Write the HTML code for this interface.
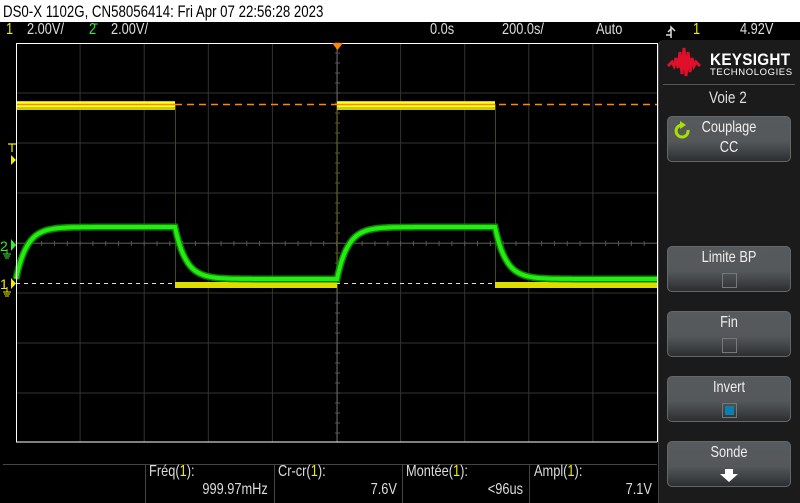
<!DOCTYPE html>
<html><head><meta charset="utf-8"><style>
*{margin:0;padding:0}
body{width:800px;height:503px;background:#000;position:relative;overflow:hidden;font-family:"Liberation Sans",sans-serif}
.t{position:absolute;white-space:nowrap;transform-origin:0 0}
.s{font-size:16px;color:#ddd;transform:scaleX(.8);top:21px}
.m{font-size:16px;color:#ddd;transform:scaleX(.8)}
.r{position:absolute;white-space:nowrap;font-size:16px;color:#ddd;transform:scaleX(.8);transform-origin:100% 0;text-align:right}
#title{position:absolute;left:0;top:0;width:800px;height:22px;background:#fff}
#panel{position:absolute;left:658px;top:40px;width:142px;height:463px;background:#1b1b1b;border-left:1px solid #444;border-top-left-radius:6px}
.btn{position:absolute;left:667px;width:122px;height:44px;border:1px solid #666;border-radius:5px;background:linear-gradient(#575a5d 0%,#55585b 55%,#2c2f32 100%);color:#eee;font-size:16px;text-align:center}
.btn .l1{position:absolute;top:2px;left:0;right:0;transform:scaleX(.8);transform-origin:50% 0}
.chk{position:absolute;left:54px;top:26px;width:13px;height:13px;border:1px solid #777}
</style></head><body>
<div id="title"><div class="t" style="left:3px;top:2px;font-size:17px;color:#000;transform:scaleX(.78)">DS0-X 1102G, CN58056414: Fri Apr 07 22:56:28 2023</div></div>
<div class="t s" style="left:6px;color:#ee0">1</div>
<div class="t s" style="left:27px">2.00V/</div>
<div class="t s" style="left:89px;color:#3e3">2̄</div>
<div class="t s" style="left:111px">2.00V/</div>
<div class="t s" style="left:430px">0.0s</div>
<div class="t s" style="left:502px">200.0s/</div>
<div class="t s" style="left:596px">Auto</div>
<svg width="14" height="16" style="position:absolute;left:664px;top:24px"><path d="M2,11 H7 V3 L11,7 M4,8 L7,5 M7,11 V14" stroke="#ddd" stroke-width="1.5" fill="none"/></svg>
<div class="t s" style="left:693px;color:#ee0">1</div>
<div class="t s" style="left:740px">4.92V</div>

<svg width="800" height="503" style="position:absolute;left:0;top:0" id="sv">
<g stroke="#333" stroke-width="1" id="grid"></g>
<line x1="337.5" y1="43" x2="337.5" y2="442" stroke="#444"/>
<line x1="16" y1="243.5" x2="657" y2="243.5" stroke="#444"/>
<g id="ticks" stroke="#555"></g>
<line x1="175.5" y1="104" x2="175.5" y2="288" stroke="#4a4a00"/>
<line x1="337.5" y1="104" x2="337.5" y2="288" stroke="#4a4a00"/>
<line x1="495.5" y1="104" x2="495.5" y2="288" stroke="#4a4a00"/>
<line x1="16" y1="283.5" x2="657" y2="283.5" stroke="#ddd" stroke-dasharray="4,4"/>
<line x1="175" y1="104.5" x2="657" y2="104.5" stroke="#ff8800" stroke-width="1.5" stroke-dasharray="7,5"/>
<rect x="16" y="101" width="159" height="9" fill="#cccc00"/>
<rect x="337" y="101" width="158" height="9" fill="#cccc00"/>
<rect x="16" y="102" width="159" height="5" fill="#ffff20"/>
<rect x="337" y="102" width="158" height="5" fill="#ffff20"/>
<line x1="16" y1="104.5" x2="175" y2="104.5" stroke="#ff8800" stroke-width="1.5"/>
<line x1="337" y1="104.5" x2="495" y2="104.5" stroke="#ff8800" stroke-width="1.5"/>
<rect x="175" y="282" width="162" height="6" fill="#dddd00"/>
<rect x="495" y="282" width="162" height="6" fill="#dddd00"/>
<path id="g2" fill="none" stroke="#118800" stroke-width="7"/>
<path id="g" fill="none" stroke="#22ee11" stroke-width="4"/>
<line x1="16.5" y1="43" x2="16.5" y2="442" stroke="#fff"/>
<line x1="16" y1="43.5" x2="657" y2="43.5" stroke="#fff"/>
<line x1="16" y1="442" x2="657" y2="442" stroke="#fff"/>
<line x1="657.5" y1="43" x2="657.5" y2="442" stroke="#fff"/>
<polygon points="332,43 343,43 337.5,50" fill="#ff8800"/>
<path d="M8,144h8M12,144v8" stroke="#ee0" stroke-width="1.2"/>
<polygon points="11,155 11,165 16,160" fill="#ee0"/>
<text x="0" y="251" fill="#3e3" font-size="14" font-family="Liberation Sans">2</text>
<polygon points="11,239 11,251 16,245" fill="#3e3"/>
<path d="M7,249v5M3,254h8M4,256h6M5,258h4" stroke="#3e3" fill="none"/>
<text x="0" y="289" fill="#ee0" font-size="14" font-family="Liberation Sans">1</text>
<polygon points="11,278 11,289 16,283.5" fill="#ee0"/>
<path d="M7,287v5M3,292h8M4,294h6M5,296h4" stroke="#ee0" fill="none"/>
<line x1="3" y1="464.5" x2="657" y2="464.5" stroke="#444"/>
<g stroke="#444"><line x1="145.5" y1="464" x2="145.5" y2="503"/><line x1="274.5" y1="464" x2="274.5" y2="503"/><line x1="402.5" y1="464" x2="402.5" y2="503"/><line x1="529.5" y1="464" x2="529.5" y2="503"/></g>
</svg>
<script>
var gr=document.getElementById('grid'),s='';
for(var i=1;i<10;i++){var x=16+i*64.1;s+='<line x1="'+x+'" y1="43" x2="'+x+'" y2="442"/>';}
for(var j=1;j<8;j++){var y=43+j*50;s+='<line x1="16" y1="'+y+'" x2="657" y2="'+y+'"/>';}
gr.innerHTML=s;
var t='';for(var k=0;k<50;k++){var x=16+k*12.82;t+='<line x1="'+x+'" y1="241" x2="'+x+'" y2="246"/>';}
for(var k=0;k<40;k++){var y=43+k*10;t+='<line x1="335" y1="'+y+'" x2="340" y2="'+y+'"/>';}
document.getElementById('ticks').innerHTML=t;
var d='',hi=227,lo=279,tau=11;
function seg(a,b,up){for(var x=a;x<=b;x+=1){var e=Math.exp(-(x-a)/tau);var y=up?hi+(lo-hi)*e:lo-(lo-hi)*e;d+=(d?'L':'M')+x+','+y.toFixed(1);}}
seg(16,175,true);seg(175,337,false);seg(337,495,true);seg(495,657,false);
document.getElementById('g').setAttribute('d',d);
document.getElementById('g2').setAttribute('d',d);
</script>

<div id="panel"></div>
<svg width="40" height="40" style="position:absolute;left:666px;top:44px">
<path d="M2,22 L6,18 L8,22 L10,14 L12,24 L14,8 L16,30 L18,4 L20,32 L22,8 L24,28 L26,14 L28,22 L30,18 L34,22" stroke="#e0102a" stroke-width="3" fill="none"/>
</svg>
<div class="t" style="left:710px;top:50px;font-size:17px;font-weight:bold;color:#fff;letter-spacing:.3px;transform:scaleX(.9)">KEYSIGHT</div>
<div class="t" style="left:710px;top:67px;font-size:9.5px;color:#fff;letter-spacing:.6px">TECHNOLOGIES</div>
<div style="position:absolute;left:663px;top:84px;width:132px;height:1px;background:#555"></div>
<div class="t" style="left:709px;top:88px;font-size:17px;color:#ddd;transform:scaleX(.8)">Voie 2</div>

<div class="btn" style="top:116px"><div class="l1">Couplage</div><div class="l1" style="top:22px">CC</div>
<svg width="20" height="20" style="position:absolute;left:5px;top:4px"><path d="M15,9 A6,6 0 1 1 9,4" stroke="#a8e000" stroke-width="3" fill="none"/><polygon points="7,0 13,4 7,8" fill="#a8e000"/></svg></div>
<div class="btn" style="top:246px"><div class="l1">Limite BP</div><div class="chk"></div></div>
<div class="btn" style="top:311px"><div class="l1">Fin</div><div class="chk"></div></div>
<div class="btn" style="top:376px"><div class="l1">Invert</div><div class="chk"><div style="position:absolute;left:2px;top:2px;width:9px;height:9px;background:#0a80b0"></div></div></div>
<div class="btn" style="top:441px"><div class="l1">Sonde</div>
<svg width="20" height="14" style="position:absolute;left:51px;top:27px"><polygon points="6,0 14,0 14,5 19,5 10,13 1,5 6,5" fill="#fff"/></svg></div>

<div class="t m" style="left:149px;top:463px">Fréq(<span style="color:#ee0">1</span>):</div>
<div class="r" style="right:532px;top:481px">999.97mHz</div>
<div class="t m" style="left:278px;top:463px">Cr-cr(<span style="color:#ee0">1</span>):</div>
<div class="r" style="right:403px;top:481px">7.6V</div>
<div class="t m" style="left:406px;top:463px">Montée(<span style="color:#ee0">1</span>):</div>
<div class="r" style="right:277px;top:481px">&lt;96us</div>
<div class="t m" style="left:534px;top:463px">Ampl(<span style="color:#ee0">1</span>):</div>
<div class="r" style="right:148px;top:481px">7.1V</div>
</body></html>
